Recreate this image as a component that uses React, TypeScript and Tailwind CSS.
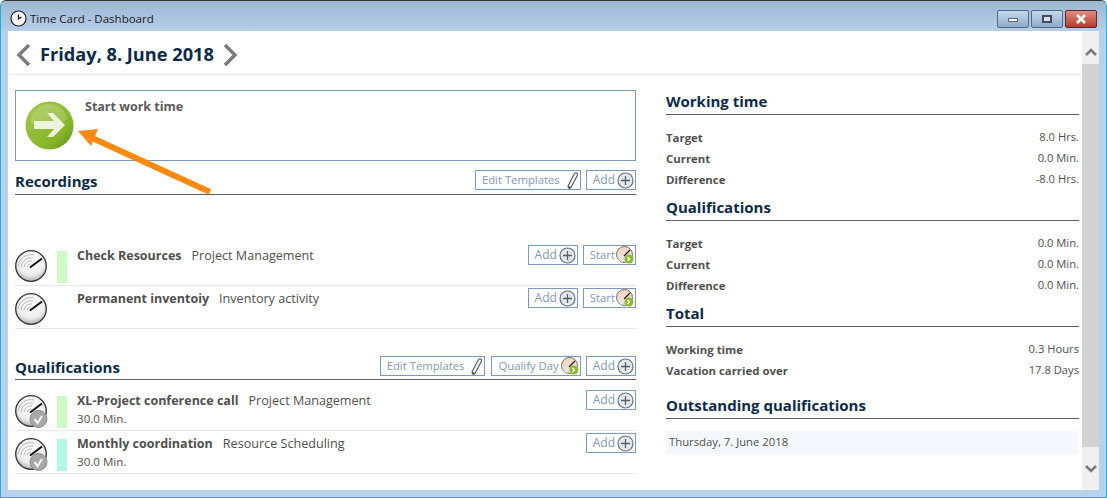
const Gauge = ({ check = false }: { check?: boolean }) => (
  <svg width="34" height="34" viewBox="0 0 34 34" className="shrink-0">
    <defs>
      <radialGradient id="gaugeFace" cx="50%" cy="35%" r="70%">
        <stop offset="0%" stopColor="#ffffff" />
        <stop offset="65%" stopColor="#ececec" />
        <stop offset="100%" stopColor="#a0a0a0" />
      </radialGradient>
    </defs>
    <circle cx="16" cy="17" r="15.300" fill="url(#gaugeFace)" stroke="#333333" strokeWidth="1.300" />
    <path d="M3 17a13 13 0 0 1 16-11M6 18a10 10 0 0 1 12-9M9 18a7 7 0 0 1 8-6M12 18a4 4 0 0 1 4-3" fill="none" stroke="#b8b8b8" strokeWidth="1" />
    <path d="M15 18.500L27 9.500" stroke="#111111" strokeWidth="2" />
    {check && (
      <g>
        <circle cx="23.500" cy="25" r="8.500" fill="#a8a8a8" stroke="#8c8c8c" />
        <path d="M19.500 25l3 4 4.500-7" fill="none" stroke="#ffffff" strokeWidth="2" />
      </g>
    )}
  </svg>
)

const PlusIcon = () => (
  <svg width="17" height="17" viewBox="0 0 17 17" className="shrink-0">
    <circle cx="8.500" cy="8.500" r="7.500" fill="#e3e8ec" stroke="#69727c" strokeWidth="1.200" />
    <path d="M8.500 4v9M4 8.500h9" stroke="#56606a" strokeWidth="1.300" />
  </svg>
)

const PinIcon = () => (
  <svg width="14" height="19" viewBox="0 0 14 19" className="shrink-0">
    <path d="M3 15L9.500 2.500a1.700 1.700 0 0 1 3 1.500L6 16.500a1.400 1.400 0 0 1-2.600-1z" fill="#f7f7f7" stroke="#4c555e" strokeWidth="1.100" />
    <path d="M3 14.500l3 1.500-1 1.800-2.300-.8z" fill="#4c5a66" />
  </svg>
)

const ClockStartIcon = () => (
  <svg width="18" height="18" viewBox="0 0 18 18" className="shrink-0">
    <circle cx="8.500" cy="8.500" r="8" fill="#f3d9c6" stroke="#6d6d6d" />
    <path d="M1.500 9a7 7 0 0 0 5 7L9 9z" fill="#e4e4e4" />
    <path d="M8 10l6-6" stroke="#222222" strokeWidth="1.300" />
    <circle cx="13" cy="13" r="4.500" fill="#8dbb30" />
    <path d="M11.500 11l2 2-2 2" fill="none" stroke="#ffffff" strokeWidth="1.300" />
  </svg>
)

const Btn = ({
  label,
  icon,
  gap = "gap-[2px]",
  size = "text-[11.300px]",
}: {
  label: string
  icon: React.ReactNode
  gap?: string
  size?: string
}) => (
  <div className={`h-[20px] flex items-center ${gap} ${size} border border-[#7c98bf] pl-[6px] pr-[1px] text-[#7f97bd] bg-white`}>
    <span>{label}</span>
    {icon}
  </div>
)

const AddBtn = () => <Btn label="Add" icon={<PlusIcon />} size="text-[12px]" />
const StartBtn = () => <Btn label="Start" icon={<ClockStartIcon />} gap="gap-[1px]" />

const Row = ({
  name,
  activity,
  sub,
  bar,
  check,
  actions,
}: {
  name: string
  activity: string
  sub?: string
  bar?: string
  check?: boolean
  actions: React.ReactNode
}) => (
  <div className="h-[43px] flex border-b border-[#e6e6e6]">
    <div className="w-[42px] flex items-end pb-[2px]">
      <Gauge check={check} />
    </div>
    <div className="w-[10px] h-[32px] self-end mb-[2px] shrink-0" style={{ background: bar }} />
    <div className="flex-1 pl-[10px] pt-[3px] text-[12.600px] leading-[19px] text-[#4f4f4f]">
      <div className="flex gap-[10px]">
        <span className="font-bold text-[12.500px]">{name}</span>
        <span>{activity}</span>
      </div>
      {sub && <div className="text-[11.600px] -mt-[1px]">{sub}</div>}
    </div>
    <div className="flex gap-[5px] items-start pt-[2px]">{actions}</div>
  </div>
)

const Stat = ({ label, value }: { label: string; value: string }) => (
  <div className="h-[21px] flex items-center justify-between text-[#4f4f4f]">
    <span className="font-bold text-[11.400px]">{label}</span>
    <span className="text-[11.200px]">{value}</span>
  </div>
)

const SideHead = ({ title }: { title: string }) => (
  <div className="h-[25px] pt-[1px] border-b border-[#5f5f5f] text-[15px] font-bold leading-[20px] text-[#0c2a4a]">{title}</div>
)

export default function App() {
  return (
    <div
      className="relative w-[1107px] h-[498px] overflow-hidden flex flex-col bg-[#b9d2ec] border-x border-b border-x-[#19b5d8] border-b-[#19b5d8] border-t border-t-[#333333] rounded-t-[6px]"
      style={{ fontFamily: '"Open Sans", sans-serif' }}
    >
      <div className="h-[30px] shrink-0 flex items-start justify-between pl-[9px] pr-[9px] bg-gradient-to-b from-[#9db7d3] to-[#b6cee7]">
        <div className="flex items-center gap-[3px] text-[11.500px] text-[#1a1a1a] pt-[9px]">
          <svg width="17" height="17" viewBox="0 0 17 17">
            <circle cx="8.500" cy="8.500" r="7.500" fill="#f5f5f5" stroke="#222222" strokeWidth="1.200" />
            <path d="M8.500 4.500v4.500l3-2" fill="none" stroke="#111111" strokeWidth="1.200" />
          </svg>
          <span>Time Card - Dashboard</span>
        </div>
        <div className="flex gap-[2px] mt-[9px]">
          <div className="w-[32px] h-[18px] flex items-center justify-center rounded-[2px] border border-[#4e6a8a] bg-gradient-to-b from-[#c6d8ea] to-[#8fabc8]">
            <div className="w-[10px] h-[4px] bg-white border border-[#5b6b7c] mt-[2px]" />
          </div>
          <div className="w-[32px] h-[18px] flex items-center justify-center rounded-[2px] border border-[#4e6a8a] bg-gradient-to-b from-[#c6d8ea] to-[#8fabc8]">
            <div className="w-[10px] h-[8px] border-2 border-[#3d4d5f] bg-[#d5e1ec]" />
          </div>
          <div className="w-[32px] h-[18px] flex items-center justify-center rounded-[2px] border border-[#5e2630] bg-gradient-to-b from-[#dc8f80] to-[#b5392a]">
            <svg width="12" height="10" viewBox="0 0 12 10">
              <path d="M2 1l8 8M10 1L2 9" stroke="#ffffff" strokeWidth="2.600" />
            </svg>
          </div>
        </div>
      </div>

      <div className="flex-1 flex mx-[7px] mb-[7px] min-h-0 bg-white">
        <div className="flex-1 min-w-0 flex flex-col">
          <div className="h-[44px] shrink-0 flex items-center gap-[9px] pl-[7px] pt-[4px] border-b border-[#e6e6e6]">
            <svg width="16" height="24" viewBox="0 0 16 24">
              <path d="M14 2L4 12l10 10" fill="none" stroke="#7b7b7b" strokeWidth="3.500" />
            </svg>
            <span className="text-[18.200px] font-bold text-[#0c2a4a]">Friday, 8. June 2018</span>
            <svg width="16" height="24" viewBox="0 0 16 24">
              <path d="M2 2l10 10-10 10" fill="none" stroke="#7b7b7b" strokeWidth="3.500" />
            </svg>
          </div>

          <div className="flex-1 flex pl-[7px] pr-[3px] pt-[15px] gap-[30px]">
            <div className="w-[621px] shrink-0">
              <div className="h-[71px] border border-[#7c98bf] flex pl-[9px] pt-[10px] gap-[11px]">
                <svg width="49" height="49" viewBox="0 0 49 49" className="shrink-0">
                  <defs>
                    <linearGradient id="startGreen" x1="0" y1="0" x2="1" y2="1">
                      <stop offset="0%" stopColor="#a5c94d" />
                      <stop offset="70%" stopColor="#86b528" />
                      <stop offset="100%" stopColor="#5e8a1d" />
                    </linearGradient>
                  </defs>
                  <circle cx="24.500" cy="24.500" r="24" fill="url(#startGreen)" />
                  <path d="M6 22a18 17 0 0 1 36-4c-10 8-26 9-36 4z" fill="#ffffff" opacity="0.180" />
                  <path d="M9 20h20l-7-8 6 0 12 12-12 12-6 0 7-8H9z" fill="#eef4dc" />
                </svg>
                <span className="text-[12.500px] font-bold text-[#5a5a5a] leading-[12px]">Start work time</span>
              </div>

              <div className="mt-[9px] h-[25px] flex items-start justify-between border-b border-[#5f5f5f]">
                <span className="text-[15px] font-bold text-[#0c2a4a] leading-[23px]">Recordings</span>
                <div className="flex gap-[5px]">
                  <Btn label="Edit Templates" icon={<PinIcon />} gap="gap-[5px]" />
                  <AddBtn />
                </div>
              </div>

              <div className="pt-[48px]">
                <Row
                  name="Check Resources"
                  activity="Project Management"
                  bar="#ccfcc4"
                  actions={
                    <>
                      <AddBtn />
                      <StartBtn />
                    </>
                  }
                />
                <Row
                  name="Permanent inventoiy"
                  activity="Inventory activity"
                  actions={
                    <>
                      <AddBtn />
                      <StartBtn />
                    </>
                  }
                />
              </div>

              <div className="mt-[27px] h-[24px] flex items-start justify-between border-b border-[#5f5f5f]">
                <span className="text-[15px] font-bold text-[#0c2a4a] leading-[22px]">Qualifications</span>
                <div className="flex gap-[5px]">
                  <div className="mr-[1px]">
                    <Btn label="Edit Templates" icon={<PinIcon />} gap="gap-[5px]" />
                  </div>
                  <Btn label="Qualify Day" icon={<ClockStartIcon />} />
                  <AddBtn />
                </div>
              </div>

              <div className="pt-[8px]">
                <Row
                  name="XL-Project conference call"
                  activity="Project Management"
                  sub="30.0 Min."
                  bar="#ccfcc4"
                  check
                  actions={<AddBtn />}
                />
                <Row
                  name="Monthly coordination"
                  activity="Resource Scheduling"
                  sub="30.0 Min."
                  bar="#b4f8e4"
                  check
                  actions={<AddBtn />}
                />
              </div>
            </div>

            <div className="flex-1 min-w-0">
              <SideHead title="Working time" />
              <div className="pt-[12px] pb-[6px]">
                <Stat label="Target" value="8.0 Hrs." />
                <Stat label="Current" value="0.0 Min." />
                <Stat label="Difference" value="-8.0 Hrs." />
              </div>
              <SideHead title="Qualifications" />
              <div className="pt-[12px] pb-[6px]">
                <Stat label="Target" value="0.0 Min." />
                <Stat label="Current" value="0.0 Min." />
                <Stat label="Difference" value="0.0 Min." />
              </div>
              <SideHead title="Total" />
              <div className="pt-[12px] pb-[13px]">
                <Stat label="Working time" value="0.3 Hours" />
                <Stat label="Vacation carried over" value="17.8 Days" />
              </div>
              <SideHead title="Outstanding qualifications" />
              <div className="mt-[12px] h-[23px] flex items-center pl-[3px] bg-[#f4f7fc] text-[11.300px] text-[#4f4f4f]">
                Thursday, 7. June 2018
              </div>
            </div>
          </div>
        </div>

        <div className="w-[17px] shrink-0 flex flex-col bg-[#f0f0f0]">
          <div className="h-[33px] pt-[9px] flex items-center justify-center">
            <svg width="12" height="9" viewBox="0 0 12 9">
              <path d="M1 7l5-5 5 5" fill="none" stroke="#7a7a7a" strokeWidth="2.500" />
            </svg>
          </div>
          <div className="flex-1 bg-[#d2d2d2]" />
          <div className="h-[43px] flex items-center justify-center">
            <svg width="12" height="9" viewBox="0 0 12 9">
              <path d="M1 2l5 5 5-5" fill="none" stroke="#7a7a7a" strokeWidth="2.500" />
            </svg>
          </div>
        </div>
      </div>

      <svg width="150" height="80" viewBox="0 0 150 80" className="absolute left-[69px] top-[121px]">
        <path d="M140 70L20 15" stroke="#ff8a12" strokeWidth="6" />
        <path d="M8 9l20-2-7 17z" fill="#ff8a12" />
      </svg>
    </div>
  )
}
